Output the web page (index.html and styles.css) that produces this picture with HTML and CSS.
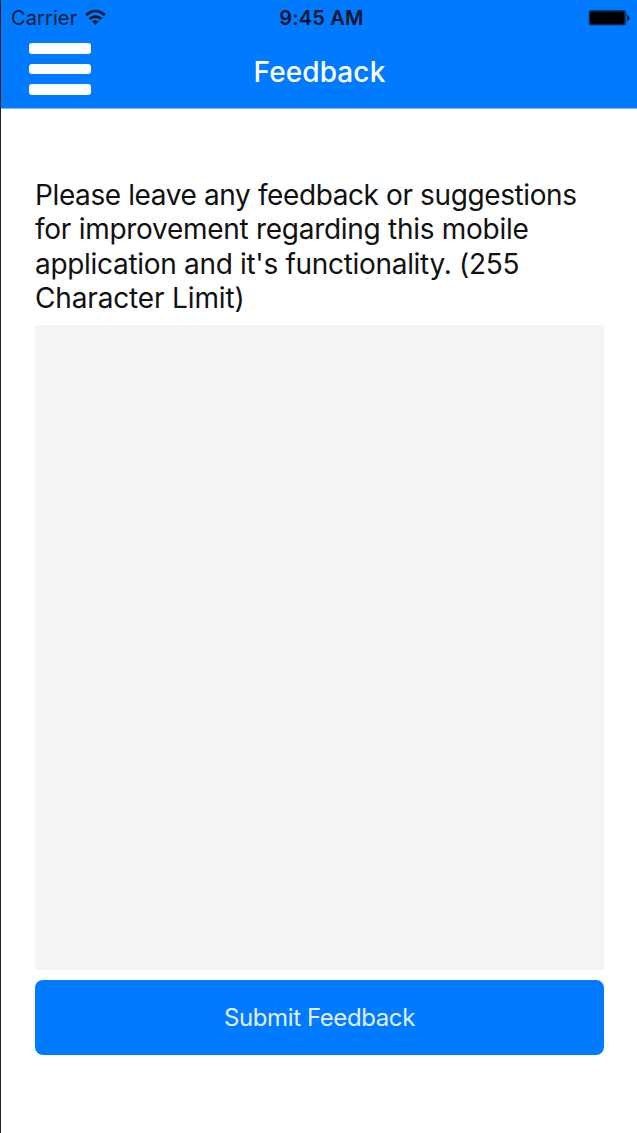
FILE: index.html
```html
<!DOCTYPE html>
<html lang="en">
<head>
<meta charset="utf-8">
<title>Feedback</title>
<link rel="stylesheet" href="styles.css">
</head>
<body>
<div class="screen">
  <header class="header">
    <div class="status">
      <div class="carrier">
        <span class="carrier-name">Carrier</span>
        <svg class="wifi" width="22" height="17" viewBox="0 0 22 17" fill="none" stroke="#001a36" stroke-width="2.8">
          <path d="M1.2 6.1C7 .8 14 .8 19.8 6.1"/>
          <path d="M4.6 10C8 6.7 13 6.7 16.4 10"/>
          <path d="M7.2 12.6C9.3 10.9 11.7 10.9 13.8 12.6L10.5 16Z" fill="#001a36" stroke="none"/>
        </svg>
      </div>
      <span class="clock">9:45 AM</span>
      <svg class="battery" width="42" height="18" viewBox="0 0 42 18">
        <rect x=".6" y="1" width="37.8" height="15.6" rx="2.5" fill="#003c80"/>
        <rect x="2" y="2.6" width="34.4" height="12.6" rx="1" fill="#000"/>
        <path d="M39.2 5.9C42.4 6.6 42.4 11.2 39.2 11.9Z" fill="#001a36"/>
      </svg>
    </div>
    <div class="navbar">
      <button class="menu" aria-label="Menu"><span class="bar"></span><span class="bar"></span><span class="bar"></span></button>
      <h1 class="title">Feedback</h1>
    </div>
  </header>
  <main class="content">
    <label class="prompt" for="feedback"><span class="tight">Please leave any feedback or suggestions</span><br>for improvement regarding this mobile<br><span class="snug">application and it's functionality. (255</span><br><span class="loose">Character Limit)</span></label>
    <textarea class="field" id="feedback" maxlength="255"></textarea>
    <button class="submit">Submit Feedback</button>
  </main>
</div>
</body>
</html>
```
FILE: styles.css
```css
* { box-sizing: border-box; }
body { margin: 0; background: #fff; font-family: Inter, "Liberation Sans", sans-serif; }
button { border: 0; padding: 0; font: inherit; }
.screen { height: 1133px; border-left: 1px solid #222; background: #fff; overflow: hidden; }
.header { height: 109px; background: #007aff; border-bottom: 1px solid #7db4f5; }
.status { display: grid; grid-template-columns: 1fr auto 1fr; height: 36px; padding: 0 7px 0 10px; align-items: center; color: #001a36; font-size: 20px; line-height: 36px; }
.carrier { display: flex; align-items: center; gap: 8px; }
.carrier-name { letter-spacing: 0.1px; }
.wifi { margin-bottom: 1px; }
.clock { padding-left: 2px; font-weight: 600; letter-spacing: 0.2px; color: #00142b; }
.battery { justify-self: end; }
.navbar { display: grid; grid-template-columns: 1fr auto 1fr; height: 72px; padding: 0 27px 0 28px; align-items: start; }
.menu { display: flex; flex-direction: column; gap: 10px; width: 62px; margin-top: 7px; background: none; }
.bar { display: block; width: 62px; height: 10.6px; border-radius: 3px; background: #fff; }
.title { margin: 0; color: #fff; font-size: 28px; font-weight: 500; letter-spacing: 0.1px; line-height: 72px; }
.content { display: flex; flex-direction: column; padding: 69px 33px 0 34px; }
.prompt { height: 147px; color: #111; font-size: 28px; letter-spacing: -0.28px; line-height: 34.3px; white-space: nowrap; }
.tight { letter-spacing: -0.39px; }
.snug { letter-spacing: -0.31px; }
.loose { letter-spacing: -0.15px; }
.field { display: block; height: 645px; margin: 0; padding: 12px; border: 0; border-radius: 0; background: #f4f4f4; color: #111; font: inherit; font-size: 24px; resize: none; outline: 0; }
.submit { height: 75px; margin-top: 10px; border-radius: 8px; background: #007aff; color: #e0efff; font-size: 24px; letter-spacing: -0.4px; }
```
